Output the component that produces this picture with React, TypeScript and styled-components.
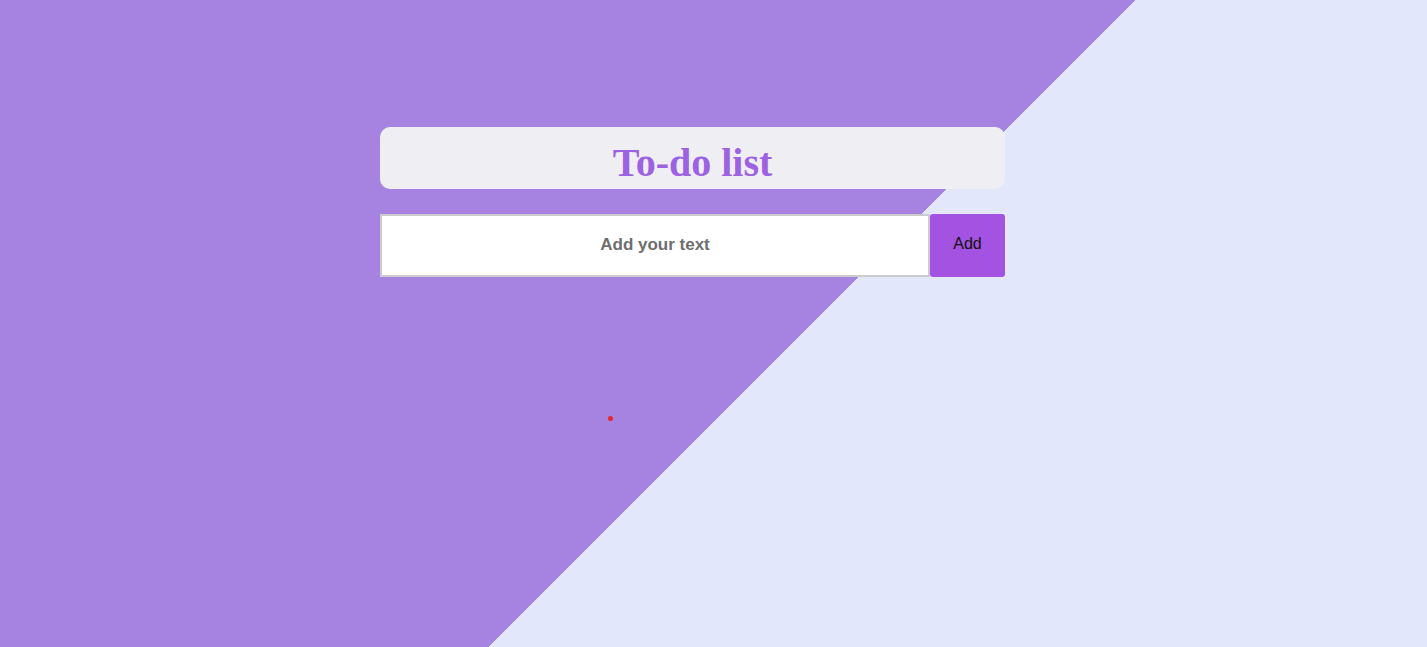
import React from "react";
import styled, { createGlobalStyle } from "styled-components";

const Global = createGlobalStyle`
  html, body { margin: 0; padding: 0; }
  body {
    width: 1427px;
    height: 647px;
    overflow: hidden;
    background: linear-gradient(135deg, #a682e1 54.75%, #e3e7fb 54.75%);
    font-family: "Liberation Sans", Arial, sans-serif;
  }
`;

const Page = styled.main`
  display: flex;
  flex-direction: column;
  padding: 127px 0 0 380px;
  width: 625px;
`;

const Header = styled.header`
  box-sizing: border-box;
  height: 62px;
  padding-top: 10px;
  border-radius: 10px;
  background: #efeef2;
  display: flex;
  align-items: center;
  justify-content: center;
`;

const Title = styled.h1`
  margin: 0;
  font-family: "Liberation Serif", "Times New Roman", serif;
  font-weight: bold;
  font-size: 40px;
  color: #9c62e2;
  line-height: 1;
`;

const Form = styled.form`
  display: flex;
  margin-top: 25px;
  height: 63px;
`;

const Input = styled.input`
  flex: 1;
  box-sizing: border-box;
  height: 63px;
  border: 2px solid #cccccc;
  background: #ffffff;
  outline: none;
  text-align: center;
  font-family: "Liberation Sans", Arial, sans-serif;
  font-size: 17px;
  font-weight: bold;
  color: #333;
  padding-bottom: 3px;
  &::placeholder {
    color: #6e6e6e;
    opacity: 1;
  }
`;

const Button = styled.button`
  width: 75px;
  height: 63px;
  border: none;
  border-radius: 3px;
  background: #a352e2;
  color: #111;
  font-family: "Liberation Sans", Arial, sans-serif;
  font-size: 16px;
  padding: 0 0 3px;
  cursor: pointer;
`;

const List = styled.ul`
  list-style: none;
  margin: 139px 0 0 228px;
  padding: 0;
`;

const Dot = styled.li`
  width: 5px;
  height: 5px;
  border-radius: 50%;
  background: #e8262c;
`;

export default function App() {
  return (
    <>
      <Global />
      <Page>
        <Header>
          <Title>To-do list</Title>
        </Header>
        <Form onSubmit={(e) => e.preventDefault()}>
          <Input placeholder="Add your text" />
          <Button type="submit">Add</Button>
        </Form>
        <List>
          <Dot />
        </List>
      </Page>
    </>
  );
}
